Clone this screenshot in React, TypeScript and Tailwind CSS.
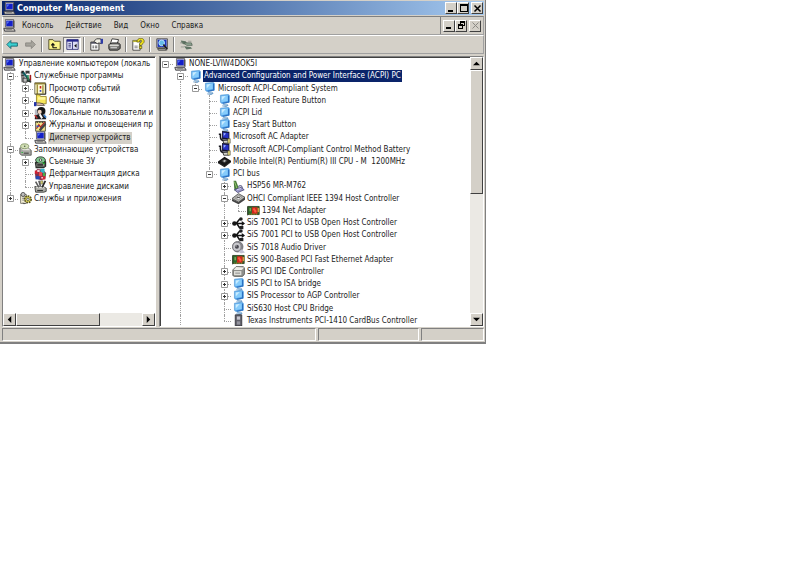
import React from 'react';
import clsx from 'clsx';

type Node = {
  label: string;
  icon: string;
  open?: boolean;
  selected?: 'active' | 'inactive';
  more?: boolean;
  kids?: Node[];
};

type Row = { node: Node; guides: boolean[]; last: boolean };

const consoleTree: Node[] = [
  {
    label: 'Служебные программы',
    icon: 'tools',
    open: true,
    kids: [
      { label: 'Просмотр событий', icon: 'events', kids: [] },
      { label: 'Общие папки', icon: 'shared', kids: [] },
      { label: 'Локальные пользователи и', icon: 'users', kids: [] },
      { label: 'Журналы и оповещения пр', icon: 'perf', kids: [] },
      { label: 'Диспетчер устройств', icon: 'computer', selected: 'inactive' },
    ],
  },
  {
    label: 'Запоминающие устройства',
    icon: 'storage',
    open: true,
    kids: [
      { label: 'Съемные ЗУ', icon: 'removable', kids: [] },
      { label: 'Дефрагментация диска', icon: 'defrag' },
      { label: 'Управление дисками', icon: 'disks' },
    ],
  },
  { label: 'Службы и приложения', icon: 'services', kids: [] },
];

const deviceTree: Node[] = [
  {
    label: 'NONE-LVIW4DOK5I',
    icon: 'computer',
    open: true,
    kids: [
      {
        label: 'Advanced Configuration and Power Interface (ACPI) PC',
        icon: 'device',
        open: true,
        selected: 'active',
        more: true,
        kids: [
          {
            label: 'Microsoft ACPI-Compliant System',
            icon: 'device',
            open: true,
            kids: [
              { label: 'ACPI Fixed Feature Button', icon: 'device' },
              { label: 'ACPI Lid', icon: 'device' },
              { label: 'Easy Start Button', icon: 'device' },
              { label: 'Microsoft AC Adapter', icon: 'power' },
              { label: 'Microsoft ACPI-Compliant Control Method Battery', icon: 'power' },
              { label: 'Mobile Intel(R) Pentium(R) III CPU - M  1200MHz', icon: 'cpu' },
              {
                label: 'PCI bus',
                icon: 'device',
                open: true,
                kids: [
                  { label: 'HSP56 MR-M762', icon: 'modem', kids: [] },
                  {
                    label: 'OHCI Compliant IEEE 1394 Host Controller',
                    icon: 'firewire',
                    open: true,
                    kids: [{ label: '1394 Net Adapter', icon: 'network' }],
                  },
                  { label: 'SiS 7001 PCI to USB Open Host Controller', icon: 'usb', kids: [] },
                  { label: 'SiS 7001 PCI to USB Open Host Controller', icon: 'usb', kids: [] },
                  { label: 'SiS 7018 Audio Driver', icon: 'audio' },
                  { label: 'SiS 900-Based PCI Fast Ethernet Adapter', icon: 'network' },
                  { label: 'SiS PCI IDE Controller', icon: 'ide', kids: [] },
                  { label: 'SIS PCI to ISA bridge', icon: 'device', kids: [] },
                  { label: 'SIS Processor to AGP Controller', icon: 'device', kids: [] },
                  { label: 'SiS630 Host CPU Bridge', icon: 'device' },
                  { label: 'Texas Instruments PCI-1410 CardBus Controller', icon: 'pcmcia' },
                ],
              },
            ],
          },
        ],
      },
    ],
  },
];

const art: Record<string, React.ReactNode> = {
  computer: (
    <>
      <path d="M3 .5h10v9.500H3z" fill="#d8d4cc" stroke="#55555f" />
      <path d="M4 2h8v7H4z" fill="#1420c8" />
      <path d="M5 3h3l-3 3z" fill="#5a78f0" />
      <path d="M1 11.500h12l2 3.500H2z" fill="#c4c0b8" stroke="#33333b" />
      <path d="M4 13h7" stroke="#777" />
      <path d="M13.500 2v9" stroke="#222" />
    </>
  ),
  device: (
    <>
      <path d="m3 1.500 10-1 1 1.500v8L5 12l-2-2z" fill="#4f9fe8" stroke="#6aa9dc" />
      <path d="M4 2.500 12 1.500v7L4 10z" fill="#86ccfb" />
      <path d="m4.500 3 5-.6L4.500 8z" fill="#c9ecff" />
      <path d="M13 2v8L6 11.500" stroke="#2a6fc0" fill="none" strokeWidth="1.300" />
      <path d="M7 12h4l2 2-3 2-5-1z" fill="#6f9fca" />
      <path d="m6 14 5-.8" stroke="#d7e6f2" />
    </>
  ),
  tools: (
    <>
      <path d="M2 2h5v13H3z" fill="#858585" />
      <path d="M3 1h3v3H3zM3 6h3v1H3z" fill="#222" />
      <path d="m5 3 9 11" stroke="#0f5b61" strokeWidth="2.500" />
      <path d="M11 6v8" stroke="#2c8f58" strokeWidth="2" />
      <path d="M14 6v7" stroke="#a01c1c" strokeWidth="2" />
      <path d="M8 1h5v4l-2-1-3 1z" fill="#3b3b3b" />
      <path d="M5 10h5v5H5z" fill="#bdbdbd" stroke="#222" />
      <path d="m10 13 5 2" stroke="#222" strokeWidth="1.500" />
    </>
  ),
  events: (
    <>
      <path d="M1 1h13v14H1z" fill="#fffbd2" stroke="#55503a" />
      <path d="M1 1h13v2H1z" fill="#8a7c33" />
      <path d="M4 3v12M11 4v10" stroke="#938426" strokeWidth="1.500" />
      <path d="M7 5h2v3H7z" fill="#c32121" />
      <path d="M7 10h2v2H7z" fill="#2932b8" />
      <path d="M14.500 2v13H2" stroke="#222" fill="none" />
    </>
  ),
  shared: (
    <>
      <path d="M3 1h4l1 2h7v9H3z" fill="#f7e65a" stroke="#8c7b20" />
      <path d="M5 4h9v3H5z" fill="#fff7a0" />
      <path d="M1 11h6l4 1 2 2H5l-4-1z" fill="#e6c6b0" stroke="#4c443e" />
      <path d="M0 10h3v5H0z" fill="#2333a6" />
    </>
  ),
  users: (
    <>
      <path d="M1 3h13v12H1z" fill="#b8bcc6" />
      <circle cx="9" cy="5" r="5" fill="#151515" />
      <circle cx="7" cy="6" r="2.500" fill="#f3d6c2" />
      <path d="M1 15c0-5 3-6 6-6s8 2 8 6z" fill="#1c1c20" />
      <path d="m7 9 3 5" stroke="#fff" strokeWidth="2.500" />
      <path d="m1 10 3 4" stroke="#b82c29" strokeWidth="2" />
      <path d="m12 10 3 3" stroke="#387dc9" strokeWidth="2" />
    </>
  ),
  perf: (
    <>
      <path d="M2 3h12v12H2z" fill="#f4e78a" stroke="#3f3c30" />
      <path d="M2 4h12" stroke="#2a2a2a" strokeDasharray="1 1" strokeWidth="2" />
      <path d="m3 12 3-5 2 3 5-6" fill="none" stroke="#b42525" strokeWidth="1.500" />
      <path d="m6 13 8-9 1 3-7 8z" fill="#454545" />
      <path d="M3 8h3v2H3z" fill="#3d4eb5" />
    </>
  ),
  storage: (
    <>
      <path d="M1 6h10l4 3v6H3l-2-2z" fill="#a9a9a4" stroke="#4d4d4a" />
      <path d="M2 6h9l3 3H5z" fill="#e6e6df" />
      <ellipse cx="7" cy="4" rx="5" ry="3" fill="#d3dfb6" stroke="#7d9160" />
      <circle cx="7" cy="4" r="1" fill="#4f624b" />
      <path d="M6 12.500h6" stroke="#222" />
      <path d="M3 11h2v1H3z" fill="#17b62c" />
    </>
  ),
  removable: (
    <>
      <path d="m1 8 4-4h8l2 3v6l-3 2H2z" fill="#2a2d2a" />
      <ellipse cx="8" cy="5" rx="6" ry="4" fill="#7fc58d" stroke="#202820" />
      <circle cx="8" cy="5" r="1.500" fill="#fff" stroke="#333" />
      <path d="M3 9h10v4H3z" fill="#8c8c86" />
      <path d="M4 11h7" stroke="#111" strokeWidth="1.500" />
      <path d="M11 8h2v2h-2z" fill="#15b827" />
    </>
  ),
  defrag: (
    <>
      <path d="m4 1 7 1 4 4-1 7-5 2-7-2-1-7z" fill="#7c3550" />
      <path d="M1 3h4v4H1zM9 10h5v4H9z" fill="#d12233" />
      <path d="M8 1h5v5H8z" fill="#35b3c8" />
      <path d="M2 10h5v4H2z" fill="#2648b6" />
      <path d="M6 5h4v5H6z" fill="#f0474c" />
      <path d="M11 6h3v4h-3z" fill="#4aad45" />
      <path d="M4 2h3v3H4zM9 11h2v2H9z" fill="#f5cfd4" />
    </>
  ),
  disks: (
    <>
      <path d="M1 8h10l4 2v4l-3 1H2z" fill="#a8a8a3" stroke="#30302e" />
      <path d="M2 8h9l3 2H4z" fill="#e3e3dc" />
      <path d="m2 2 4 7M6 1l2 7" stroke="#5c5c5c" strokeWidth="2" />
      <path d="m14 1-4 8" stroke="#262626" strokeWidth="2" />
      <path d="M8 1h3v4H8z" fill="#d0cb72" stroke="#333" strokeWidth=".5" />
      <path d="M4 13h7" stroke="#111" />
    </>
  ),
  services: (
    <>
      <path d="M2 3h7v11H2z" fill="#f4f0d8" stroke="#6b685b" />
      <path d="M4 6h4M4 8h3M4 10h3" stroke="#777" />
      <circle cx="11" cy="9" r="4" fill="#ded55a" stroke="#57531f" strokeDasharray="2 1" strokeWidth="2" />
      <circle cx="11" cy="9" r="1.500" fill="#fff" stroke="#444" />
      <circle cx="5" cy="3" r="2.500" fill="#bebebe" stroke="#444" />
      <path d="m4 13 5 1-3 1z" fill="#555" />
    </>
  ),
  power: (
    <>
      <path d="m5 0 9 1v10l-9-1z" fill="#15152e" />
      <path d="m6 1.500 7 1v6.500L6 8z" fill="#2631c4" />
      <path d="m7 2.500 3 .5L7 6z" fill="#9cb3ff" />
      <path d="M1 4h2v3c0 3 1 5 6 5" fill="none" stroke="#15151c" strokeWidth="2" />
      <path d="M6 11.500h7V15H7z" fill="#d6d6d0" stroke="#222" />
      <path d="M12 9.500h3V15h-3z" fill="#f0e57a" stroke="#333" strokeWidth=".7" />
    </>
  ),
  cpu: (
    <>
      <path d="m0 8 8-6 8 5v2l-8 6-8-5z" fill="#161616" />
      <path d="m4 7.500 4-3 4 2.500-4 3z" fill="#3c3c3c" />
      <path d="m6 7.500 2-1.500 2 1-2 1.500z" fill="#c7c7c7" />
      <path d="m1 10 7 4 7-5" fill="none" stroke="#4b4b4b" strokeDasharray="1 1" />
    </>
  ),
  modem: (
    <>
      <path d="M2 1h3l3 8-2 4H3z" fill="#477b3a" />
      <path d="m3 2 3 8" stroke="#a5d07a" />
      <path d="m3 12 8-3 4 3-8 3.500z" fill="#9a99c8" stroke="#4a4878" />
      <path d="m6 12 5-1.500" stroke="#dedcff" />
      <path d="M8 9c0-2 3-3 4-1l1 2" fill="none" stroke="#77779a" strokeWidth="1.500" />
    </>
  ),
  firewire: (
    <>
      <path d="m0 8 8-6 8 4.500-8 6z" fill="#b5b5b0" stroke="#464646" />
      <path d="m0 8.500 8 4 8-6v3l-8 5.500-8-4z" fill="#444" />
      <path d="m4 7.500 4.500-3L12 6.500 8 9.500z" fill="#eee" stroke="#888" />
      <path d="m6 7 4-.5" stroke="#333" />
    </>
  ),
  network: (
    <>
      <path d="M.5 3v11" stroke="#333" />
      <path d="M1 3h14v10H1z" fill="#2b6a2d" stroke="#2c3b1c" />
      <path d="M6 4h7v8H6z" fill="#d0281b" />
      <path d="m7 6 2-1 3 4-2 2z" fill="#ff5a44" />
      <path d="M13 5h2v5h-2z" fill="#d99a3d" />
      <path d="M3 5h2v4H3z" fill="#7da455" />
      <path d="M3 12.500h10" stroke="#d7b72c" strokeDasharray="1 1" />
    </>
  ),
  usb: (
    <>
      <path d="M2 8h12M5 8l4-5h2M6 8l3 5h3" fill="none" stroke="#111" strokeWidth="1.800" />
      <circle cx="3" cy="8" r="2.800" fill="#161616" />
      <path d="m12 5 4 3-4 3z" fill="#161616" />
      <circle cx="11" cy="2.500" r="2.200" fill="#222" />
      <path d="M9 11h5v4H9z" fill="#222" />
    </>
  ),
  audio: (
    <>
      <circle cx="7" cy="7" r="6.500" fill="#85858a" stroke="#66666c" />
      <ellipse cx="6" cy="7" rx="4.500" ry="5" fill="#c9c9ce" />
      <circle cx="6" cy="7" r="2.500" fill="#4a4a52" />
      <circle cx="5" cy="6" r=".8" fill="#ddd" />
      <path d="m8 13 4-3 4 4-5 1.500z" fill="#c2c2d4" />
    </>
  ),
  ide: (
    <>
      <path d="m1 6 4-4h9l1.500 2v7L13 14H3l-2-1z" fill="#8e8e8a" stroke="#5a5a57" />
      <path d="M5 2.500 2 6h10l3-3z" fill="#efefea" />
      <path d="M2.500 7.500h9v5h-9z" fill="#e0e0da" />
      <path d="M4 10h6" stroke="#777" />
    </>
  ),
  pcmcia: (
    <>
      <path d="M4 1h8v14H4z" fill="#60606a" stroke="#303038" />
      <path d="M6 3h4v4H6z" fill="#c7c7d0" />
      <path d="M6 9h4v4H6z" fill="#94949e" />
      <path d="M5 15h7" stroke="#111" strokeDasharray="1 1" />
    </>
  ),
  back: <path d="m1 8 5-5v3h8v4H6v3z" fill="#39d0d0" stroke="#0d5a66" />,
  forward: <path d="m14 8-5-5v3H2v4h7v3z" fill="#a5a39b" stroke="#85837c" />,
  up: (
    <>
      <path d="M1 2h5l2 2h7v10H1z" fill="#fbf489" stroke="#3a3718" />
      <path d="M6 12h5M6 12V8M4 9l2-2 2 2" fill="none" stroke="#111" strokeWidth="1.500" />
    </>
  ),
  panes: (
    <>
      <path d="M1 2h14v12H1z" fill="#dcdcf4" stroke="#25256e" />
      <path d="M1 2h14v2.500H1z" fill="#25258c" />
      <path d="M8 4v10" stroke="#25256e" />
      <path d="M3 7h3M3 9h3M3 11h3" stroke="#25256e" />
      <path d="m13 7-3 2.500 3 2.500z" fill="#111" />
    </>
  ),
  properties: (
    <>
      <path d="M1 5h10v10H1z" fill="#fff" stroke="#222" />
      <path d="M1 5h10v2H1z" fill="#4c4c5c" />
      <path d="M3 10h2M3 12h2M6 10h3M6 12h3" stroke="#333" />
      <path d="m5 4 3-3h5l1 2v4l-3-1-2 1-3-2z" fill="#f2f0e6" stroke="#222" />
      <path d="M13 1h3v6h-3z" fill="#2e3ca6" />
    </>
  ),
  print: (
    <>
      <path d="m5 1 8 1-2 6-8-1z" fill="#fff" stroke="#222" />
      <path d="m1 8 4-2h8l2 2v5l-3 2H2l-1-2z" fill="#6f6f6d" stroke="#191919" />
      <path d="M2 8h10l2 1-2 1H2z" fill="#d9d9d4" />
      <path d="M3 12h8" stroke="#fff" />
    </>
  ),
  help: (
    <>
      <path d="M1 3h9v12H1z" fill="#fff" stroke="#333" />
      <path d="M1 3h9v2H1z" fill="#bcb63a" />
      <path d="M6 5c0-6 9-6 9-1 0 3-3 3-3 5H9c0-4 3-3 3-5 0-2-3-2-3 1z" fill="#f4e61e" stroke="#4c480c" strokeWidth=".8" />
      <path d="M9 10h3v3H9z" fill="#f4e61e" stroke="#4c480c" strokeWidth=".8" />
      <path d="M3 10h4M3 12h4" stroke="#666" />
    </>
  ),
  scan: (
    <>
      <path d="M1 1h13v11H1z" fill="#e2ded5" stroke="#38383e" />
      <path d="M2 2h11v9H2z" fill="#1b35bd" />
      <circle cx="7" cy="6" r="3.500" fill="#65bce8" stroke="#cbeeff" />
      <path d="m9 8 5 6" stroke="#202020" strokeWidth="2" />
      <path d="M2 13h9l2 2H3z" fill="#bbb7ad" stroke="#333" />
    </>
  ),
  plug: (
    <>
      <path d="m1 3 6 1 2 3-4 1-3-2z" fill="#5f7464" />
      <path d="M5 6h9l1 3H8z" fill="#92a794" stroke="#536456" />
      <path d="m5 10 8 1 2 2-7 1z" fill="#5f7464" />
      <path d="M0 6h3M1 11h4M10 4h4" stroke="#91948c" />
    </>
  ),
};

const levelWidth = ['w-[15px]', 'w-[15px]', 'w-[14px]', 'w-[15px]', 'w-[14px]', 'w-[15px]'];
const raised = 'border border-t-white border-l-white border-r-[#404040] border-b-[#404040] bg-[#d4d0c8]';
const sunken = 'border border-t-[#808080] border-l-[#808080] border-r-white border-b-white';
const track = 'bg-[#ebe9e4]';

function flatten(nodes: Node[], guides: boolean[] = []): Row[] {
  return nodes.flatMap((node, i) => {
    const last = i === nodes.length - 1 && !node.more;
    return [{ node, guides, last }, ...flatten(node.open && node.kids ? node.kids : [], [...guides, !last])];
  });
}

function Icon({ name, className = 'size-[13px]' }: { name: string; className?: string }) {
  return (
    <svg viewBox="0 0 16 16" className={clsx('shrink-0', className)} aria-hidden="true">
      {art[name]}
    </svg>
  );
}

function Guide({ shown, width }: { shown: boolean; width: string }) {
  return (
    <span className={clsx('flex shrink-0 pl-[7px]', width)}>
      {shown && <span className="border-l border-dotted border-[#a0a0a0]" />}
    </span>
  );
}

function Branch({ row, width, root }: { row: Row; width: string; root: boolean }) {
  const { node, last } = row;
  return (
    <span className={clsx('relative flex shrink-0 items-center pl-[4px]', width)}>
      {!root && (
        <span className={clsx('absolute top-0 left-[7px] border-l border-dotted border-[#a0a0a0]', last ? 'h-1/2' : 'h-full')} />
      )}
      <span className="absolute top-1/2 right-0 left-[7px] border-t border-dotted border-[#a0a0a0]" />
      {node.kids && (
        <button aria-label={node.open ? 'Collapse' : 'Expand'} className="relative flex size-[7px] bg-white">
          <svg viewBox="0 0 7 7" className="size-[7px]">
            <path d="M.5.5h6v6h-6z" fill="#fff" stroke="#999" />
            <path d={node.open ? 'M2 3.500h3' : 'M2 3.500h3M3.500 2v3'} stroke="#333" />
          </svg>
        </button>
      )}
    </span>
  );
}

function TreeRow({ row, hasRoot }: { row: Row; hasRoot: boolean }) {
  const { node, guides } = row;
  const depth = guides.length;
  return (
    <li role="treeitem" aria-selected={!!node.selected} className="flex min-h-0 whitespace-pre">
      {guides.map((shown, i) => (
        <Guide key={i} shown={shown} width={levelWidth[i]} />
      ))}
      <Branch row={row} width={levelWidth[depth]} root={hasRoot && depth === 0} />
      <span className="flex w-[15px] shrink-0 items-center justify-center">
        <Icon name={node.icon} />
      </span>
      <span
        className={clsx(
          'flex items-center px-px',
          node.selected === 'active' && 'bg-[#0a246a] text-white',
          node.selected === 'inactive' && 'bg-[#d4d0c8]',
        )}
      >
        {node.label}
      </span>
    </li>
  );
}

function Arrow({ d, label }: { d: string; label: string }) {
  return (
    <button aria-label={label} className={clsx('flex size-[13px] shrink-0 items-center justify-center', raised)}>
      <svg viewBox="0 0 8 8" className="size-[7px]">
        <path d={d} fill="#000" />
      </svg>
    </button>
  );
}

function WindowButtons({ child }: { child?: boolean }) {
  const box = clsx('flex h-[12px] w-[12px] items-center justify-center', raised);
  return (
    <div className="flex shrink-0">
      <button aria-label="Minimize" className={box}>
        <svg viewBox="0 0 9 9" className="size-[9px]" shapeRendering="crispEdges">
          <path d="M1 6h5v2H1z" />
        </svg>
      </button>
      <button aria-label={child ? 'Restore' : 'Maximize'} className={box}>
        <svg viewBox="0 0 9 9" className="size-[9px]" shapeRendering="crispEdges">
          {child ? (
            <path d="M3 0h5v5H6v3H1V3h2zM4 2v1h2v1h1V2zM2 5v2h3V5z" fillRule="evenodd" />
          ) : (
            <path d="M1 0h8v8H1zM2 2v5h6V2z" fillRule="evenodd" />
          )}
        </svg>
      </button>
      <button aria-label="Close" disabled={child} className={clsx('ml-[2px]', box)}>
        <svg viewBox="0 0 9 9" className="size-[9px]">
          <path d="m1.500 1.500 6 6m0-6-6 6" stroke={child ? '#8c8a84' : '#000'} strokeWidth={child ? 1 : 1.500} />
        </svg>
      </button>
    </div>
  );
}

function ToolButton({ icon, label, pressed }: { icon: string; label: string; pressed?: boolean }) {
  return (
    <button
      aria-label={label}
      className={clsx('flex h-4 w-[18px] items-center justify-center', pressed && ['bg-[#eceae6]', sunken])}
    >
      <Icon name={icon} />
    </button>
  );
}

function Separator() {
  return <span className="mx-[2px] h-[15px] w-[2px] border-l border-[#808080] bg-white" />;
}

export default function App() {
  const left = flatten(consoleTree);
  const right = flatten(deviceTree);

  return (
    <div className="min-h-screen bg-white font-['DejaVu_Sans_Condensed','DejaVu_Sans',sans-serif] text-[8px] leading-[12px] text-[#222]">
      <main className="w-full max-w-[486px] border-r border-b-2 border-[#808080] bg-[#d4d0c8] pt-px pr-px pb-px pl-[2px]">
        <header className="flex h-[14px] items-center gap-px bg-linear-to-r from-[#0a246a] to-[#a6caf0] px-px">
          <Icon name="computer" />
          <h1 className="flex-1 text-[9px] font-bold text-white">Computer Management</h1>
          <WindowButtons />
        </header>

        <div className="mt-px flex h-[19px] items-stretch border border-t-[#808080] border-r-[#a0a0a0] border-b-[#a0a0a0] border-l-white">
          <nav className="flex flex-1 items-center">
            <Icon name="computer" />
            <div className="ml-[6px] flex gap-3">
              {['Консоль', 'Действие', 'Вид', 'Окно', 'Справка'].map((item) => (
                <button key={item}>{item}</button>
              ))}
            </div>
          </nav>
          <div className="flex items-center border-l border-[#808080] px-[2px]">
            <WindowButtons child />
          </div>
        </div>

        <div className="flex h-[19px] items-center border border-t-white border-r-[#a0a0a0] border-b-[#a0a0a0] border-l-white">
          <ToolButton icon="back" label="Назад" />
          <ToolButton icon="forward" label="Вперед" />
          <Separator />
          <ToolButton icon="up" label="Вверх" />
          <ToolButton icon="panes" label="Дерево консоли" pressed />
          <Separator />
          <ToolButton icon="properties" label="Свойства" />
          <ToolButton icon="print" label="Печать" />
          <Separator />
          <ToolButton icon="help" label="Справка" />
          <Separator />
          <ToolButton icon="scan" label="Обновить конфигурацию" />
          <Separator />
          <ToolButton icon="plug" label="Отключить" />
        </div>

        <div className="mt-[2px] flex h-[271px] gap-[3px]">
          <section className={clsx('flex w-[154px] shrink-0 flex-col bg-white', sunken)}>
            <div className="flex-1 overflow-hidden border-t border-[#404040]">
              <ul role="tree" className="grid h-[147px] auto-rows-fr">
                <li role="treeitem" className="flex items-center whitespace-nowrap">
                  <Icon name="computer" />
                  <span className="ml-[3px]">Управление компьютером (локаль</span>
                </li>
                {left.map((row, i) => (
                  <TreeRow key={i} row={row} hasRoot={false} />
                ))}
              </ul>
            </div>
            <div className={clsx('flex', track)}>
              <Arrow label="Scroll left" d="M6 0v8L2 4z" />
              <div className={clsx('w-[84px]', raised)} />
              <span className="flex-1" />
              <Arrow label="Scroll right" d="M2 0v8l4-4z" />
            </div>
          </section>

          <section className="flex min-w-0 flex-1 border border-t-[#808080] border-r-white border-b-white border-l-[#808080] bg-white">
            <div className="min-w-0 flex-1 overflow-hidden border-t border-l border-[#404040]">
              <ul role="tree" className="-ml-[3px] grid h-[269px] auto-rows-fr">
                {right.map((row, i) => (
                  <TreeRow key={i} row={row} hasRoot />
                ))}
              </ul>
            </div>
            <div className={clsx('flex flex-col', track)}>
              <Arrow label="Scroll up" d="M0 6h8L4 2z" />
              <div className={clsx('h-[124px]', raised)} />
              <span className="flex-1" />
              <Arrow label="Scroll down" d="M0 2h8L4 6z" />
            </div>
          </section>
        </div>

        <footer className="mt-px flex h-[13px] gap-[2px]">
          <div className={clsx('flex-1', sunken)} />
          <div className={clsx('w-[101px]', sunken)} />
          <div className={clsx('w-[63px]', sunken)} />
        </footer>
      </main>
    </div>
  );
}
